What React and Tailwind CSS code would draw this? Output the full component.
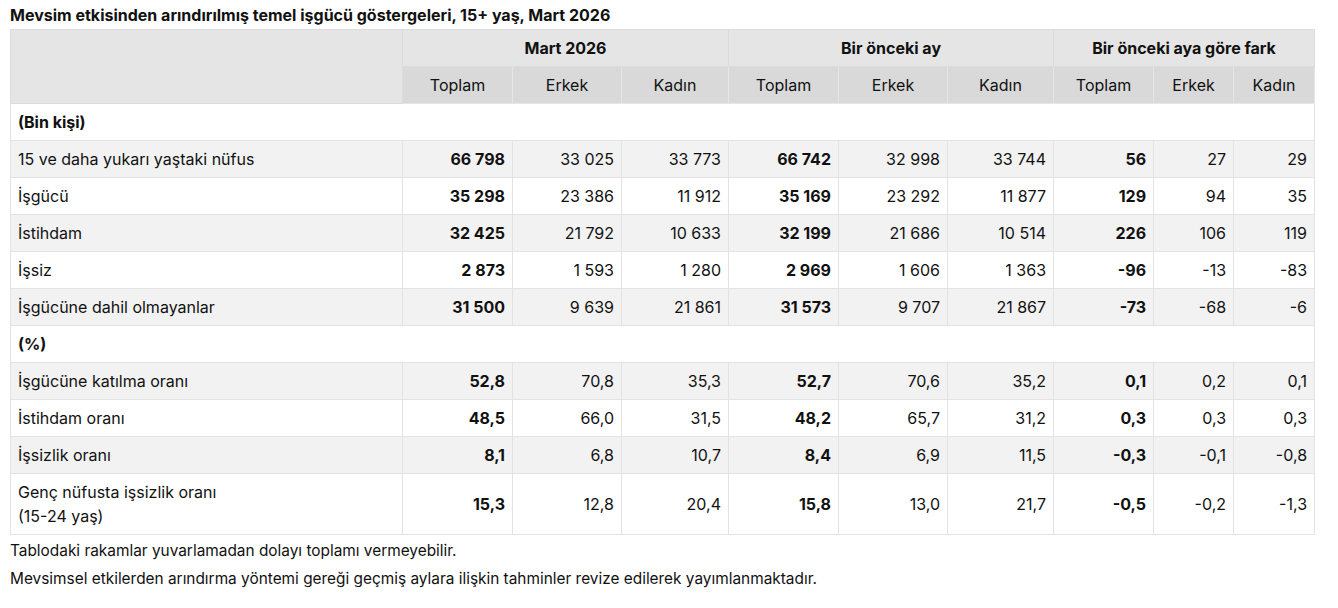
import React from "react";

const groups = ["Mart 2026", "Bir önceki ay", "Bir önceki aya göre fark"];
const subs = ["Toplam", "Erkek", "Kadın"];
const widths = [392, 110, 109, 107, 110, 109, 106, 100, 80, 81];

const rows = [
  { section: "(Bin kişi)" },
  { label: "15 ve daha yukarı yaştaki nüfus", v: ["66 798", "33 025", "33 773", "66 742", "32 998", "33 744", "56", "27", "29"] },
  { label: "İşgücü", v: ["35 298", "23 386", "11 912", "35 169", "23 292", "11 877", "129", "94", "35"] },
  { label: "İstihdam", v: ["32 425", "21 792", "10 633", "32 199", "21 686", "10 514", "226", "106", "119"] },
  { label: "İşsiz", v: ["2 873", "1 593", "1 280", "2 969", "1 606", "1 363", "-96", "-13", "-83"] },
  { label: "İşgücüne dahil olmayanlar", v: ["31 500", "9 639", "21 861", "31 573", "9 707", "21 867", "-73", "-68", "-6"] },
  { section: "(%)" },
  { label: "İşgücüne katılma oranı", v: ["52,8", "70,8", "35,3", "52,7", "70,6", "35,2", "0,1", "0,2", "0,1"] },
  { label: "İstihdam oranı", v: ["48,5", "66,0", "31,5", "48,2", "65,7", "31,2", "0,3", "0,3", "0,3"] },
  { label: "İşsizlik oranı", v: ["8,1", "6,8", "10,7", "8,4", "6,9", "11,5", "-0,3", "-0,1", "-0,8"] },
  { label: "Genç nüfusta işsizlik oranı\n(15-24 yaş)", v: ["15,3", "12,8", "20,4", "15,8", "13,0", "21,7", "-0,5", "-0,2", "-1,3"], tall: true },
];

export default function App() {
  let stripe = 0;
  return (
    <div className="w-[1338px] h-[608px] bg-white px-[10px] text-[#111] font-['Inter',sans-serif]">
      <div className="pt-[4px] pb-[3px] text-[16px] leading-[22px] font-bold">
        Mevsim etkisinden arındırılmış temel işgücü göstergeleri, 15+ yaş, Mart 2026
      </div>
      <table className="w-[1304px] table-fixed border-collapse text-[16px]">
        <colgroup>
          {widths.map((w, i) => (
            <col key={i} style={{ width: w }} />
          ))}
        </colgroup>
        <thead>
          <tr className="h-[37px] bg-[#e5e5e5]">
            <th rowSpan={2} className="border border-[#dcdcdc]"></th>
            {groups.map((g) => (
              <th key={g} colSpan={3} className="border border-[#dcdcdc] font-bold text-center">
                {g}
              </th>
            ))}
          </tr>
          <tr className="h-[37px] bg-[#d9d9d9]">
            {[0, 1, 2].map((g) =>
              subs.map((s) => (
                <th key={g + s} className="border border-[#e6e6e6] font-normal text-center">
                  {s}
                </th>
              ))
            )}
          </tr>
        </thead>
        <tbody>
          {rows.map((r, i) => {
            if (r.section) {
              stripe = 0;
              return (
                <tr key={i} className="h-[37px] bg-white">
                  <td colSpan={10} className="border border-[#e3e3e3] px-[7px] font-bold">
                    {r.section}
                  </td>
                </tr>
              );
            }
            const bg = stripe++ % 2 === 0 ? "bg-[#f2f2f2]" : "bg-white";
            return (
              <tr key={i} className={`${r.tall ? "h-[61px]" : "h-[37px]"} ${bg}`}>
                <td className="border border-[#e3e3e3] px-[7px] whitespace-pre-line leading-[24px]">
                  {r.label}
                </td>
                {r.v.map((x, j) => (
                  <td
                    key={j}
                    className={`border border-[#e3e3e3] px-[7px] text-right ${j % 3 === 0 ? "font-bold" : ""}`}
                  >
                    {x}
                  </td>
                ))}
              </tr>
            );
          })}
        </tbody>
      </table>
      <div className="text-[15.4px] leading-[28px] pt-[2px]">
        <div>Tablodaki rakamlar yuvarlamadan dolayı toplamı vermeyebilir.</div>
        <div>Mevsimsel etkilerden arındırma yöntemi gereği geçmiş aylara ilişkin tahminler revize edilerek yayımlanmaktadır.</div>
      </div>
    </div>
  );
}
